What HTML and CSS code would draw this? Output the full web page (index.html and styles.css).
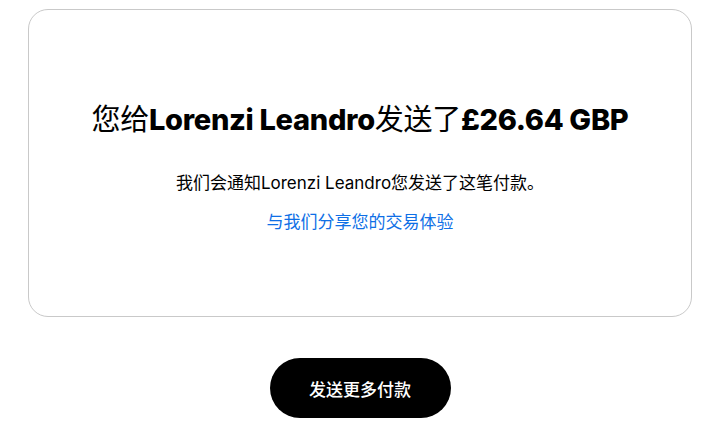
FILE: index.html
```html
<!DOCTYPE html>
<html lang="zh-CN">
<head>
<meta charset="UTF-8" />
<meta name="viewport" content="width=721, initial-scale=1.0" />
<title>付款已发送</title>
<link rel="stylesheet" href="styles.css">
</head>
<body>
  <div class="page">
    <div class="card">
      <h1 class="headline">您给<b>Lorenzi Leandro</b>发送了<b>£26.64 GBP</b></h1>
      <p class="note">我们会通知Lorenzi Leandro您发送了这笔付款。</p>
      <a class="share" href="#">与我们分享您的交易体验</a>
    </div>
    <div class="actions">
      <button class="btn-primary">发送更多付款</button>
    </div>
  </div>
</body>
</html>
```

FILE: styles.css
```css
body {
  margin: 0;
  background: #fff;
  color: #000;
  font-family: Inter, "Noto Sans CJK SC", sans-serif;
}
.page {
  padding: 9px 29px 0 28px;
}
.card {
  border: 1px solid #c9c9c9;
  border-radius: 20px;
  height: 308px;
  box-sizing: border-box;
  display: flex;
  flex-direction: column;
  align-items: center;
  padding-top: 88px;
}
.headline {
  margin: 0;
  font-size: 29px;
  font-weight: 400;
  line-height: 44px;
  letter-spacing: -0.3px;
}
.headline b {
  font-weight: 800;
}
.note {
  margin: 29px 0 0;
  font-size: 17px;
  line-height: 24px;
}
.share {
  margin-top: 15px;
  font-size: 17px;
  line-height: 24px;
  color: #0e6fe6;
  text-decoration: none;
}
.actions {
  display: flex;
  justify-content: center;
  padding-top: 41px;
}
.btn-primary {
  width: 181px;
  height: 60px;
  border: none;
  border-radius: 30px;
  background: #000;
  color: #fff;
  font-family: inherit;
  font-size: 17px;
  font-weight: 500;
}
```
